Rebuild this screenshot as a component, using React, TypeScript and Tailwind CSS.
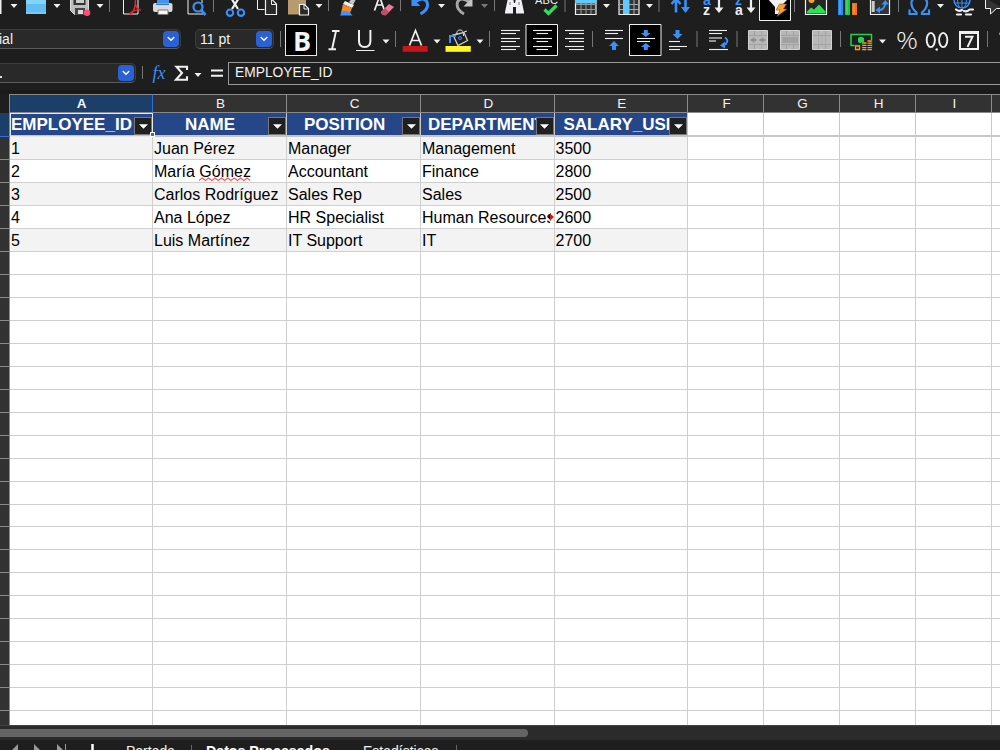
import type { ReactNode } from "react";

const W = "#f0f0f0";
const BLUE = "#3b8ff5";

/* An icon slot keeps the toolbar's own coordinates so neighbouring slots line up. */
function Slot({ x, w, y = 0, h, children }: { x: number; w: number; y?: number; h: number; children?: ReactNode }) {
  return (
    <svg className="block shrink-0" width={w} height={h} viewBox={`${x} ${y} ${w} ${h}`} fill="none">
      {children}
    </svg>
  );
}

function Caret({ x, y, c = W }: { x: number; y: number; c?: string }) {
  return <path d={`M${x - 3.5} ${y - 2}h7l-3.5 4z`} fill={c} />;
}

function Sep({ x, y1, y2 }: { x: number; y1: number; y2: number }) {
  return <path d={`M${x} ${y1}V${y2}`} stroke="#777" />;
}

function Top({ x, w, children }: { x: number; w: number; children?: ReactNode }) {
  return <Slot x={x} w={w} h={22}>{children}</Slot>;
}

function Fmt({ x, w, children }: { x: number; w: number; children?: ReactNode }) {
  return <Slot x={x} w={w} y={22} h={36}>{children}</Slot>;
}

function StandardBar() {
  return (
    <div className="flex h-[22px] w-[1000px] shrink-0 overflow-hidden">
      <Top x={0} w={22}><path d="M0 0h1.5v14H0z" fill={W} /><Caret x={14} y={6} /></Top>
      <Top x={22} w={43}>
        <path d="M26 0h20v13.5H26z" fill="#62bdf0" /><path d="M26 0h20v4H26z" fill="#86d3fa" /><path d="M26 13.2h20" stroke="#b9e4fb" />
        <Caret x={57} y={6} />
      </Top>
      <Top x={65} w={53}>
        <path d="M70.500-2h18v16.500h-14l-4-4z" fill="#bdbdbd" stroke="#ddd" /><path d="M73.500-2h12v7h-12z" fill="#333" /><path d="M76-2h8v5h-8z" fill="#ccc" />
        <path d="M75 8h10v7H75z" fill="#444" /><path d="M78 10h5v4h-5z" fill="#ddd" />
        <circle cx="87" cy="12.800" r="3.300" fill="#ff4f70" />
        <Caret x={100} y={6} /><Sep x={109.500} y1={0} y2={12} />
      </Top>
      <Top x={118} w={30}>
        <path d="M123.500-3v17h14.500v-17" stroke={W} />
        <path d="M135.500 0c0 8-2 12-5 14.500c-1.500-1.500 4-5.500 10.500-4.500c-3 0-5-3-5.500-6" stroke="#d82b30" strokeWidth="1.500" />
      </Top>
      <Top x={148} w={32}>
        <path d="M157-3h12V4h-12z" fill="#4694ea" />
        <rect x="153" y="3" width="19.500" height="9" rx="2" fill="#d9d9df" /><path d="M156 3.500h13V5h-13z" fill="#3274c6" />
        <path d="M158 10h10v4.500h-10z" fill="#f8f8f8" stroke="#777" />
      </Top>
      <Top x={180} w={40}>
        <path d="M188-3v17h15" stroke={W} /><path d="M202-2v5" stroke={W} />
        <circle cx="198" cy="7" r="4.500" stroke={BLUE} strokeWidth="2.200" /><path d="m201 10 4.500 5" stroke={BLUE} strokeWidth="2.700" />
        <Sep x={213.500} y1={0} y2={12} />
      </Top>
      <Top x={220} w={32}>
        <path d="m230.500-3 7.500 12M239.500-3l-7.500 12" stroke={W} strokeWidth="2.200" />
        <circle cx="230" cy="12.700" r="3.200" stroke={BLUE} strokeWidth="2.100" /><circle cx="241" cy="12.700" r="3.200" stroke={BLUE} strokeWidth="2.100" />
      </Top>
      <Top x={252} w={32}>
        <path d="M257.500-3v12.500h7" stroke={W} /><path d="M265.500-.5h6.500l4.500 4.500v10.500h-11z" fill="#2a2a2a" stroke={W} strokeWidth="1.200" /><path d="M271.500 0v4.500h5" stroke={W} />
      </Top>
      <Top x={284} w={50}>
        <path d="M288-1h18v15.500h-18z" fill="#b79a6d" /><path d="M299.500 4.500h5l4 4v6.500h-9z" fill="#292929" stroke={W} strokeWidth="1.200" /><path d="M304 5v4h4.500" stroke={W} />
        <Caret x={319} y={6} /><Sep x={328.500} y1={0} y2={11} />
      </Top>
      <Top x={334} w={32}>
        <path d="m349 2 4-5 3 2-3 6z" fill="#c9c9c9" /><path d="m345 1 9 4-2 3-9-4z" fill="#eee" />
        <path d="m343 4 9 4-2 5h-9z" fill="#f28a24" /><path d="M342 11.500q5-1.500 8 1l2.500 3H340z" fill="#3e94ff" />
      </Top>
      <Top x={366} w={40}>
        <path d="m374.500 10.500 5-14 5 14M376 5h7" stroke={W} strokeWidth="1.700" />
        <path d="m381 12 8-8 5 3-8 8q-4 1-5-3z" fill="#e97d98" /><path d="m381 12 4-4 4 4-3 3q-4 1-5-3z" fill="#b9506b" />
        <Sep x={400.500} y1={0} y2={11} />
      </Top>
      <Top x={406} w={44}>
        <path d="M415 2q8-6 12 0q2.500 7-6.500 12" stroke={BLUE} strokeWidth="3" /><path d="M411.500-3v9h9z" fill={BLUE} /><Caret x={441.500} y={6} />
      </Top>
      <Top x={450} w={50}>
        <path d="M469 2q-8-6-11.500 0q-2 7 6.500 12" stroke="#a8a8a8" strokeWidth="2.800" /><path d="M472.500-3v9.500h-9z" fill="#c4c4c4" /><Caret x={484.500} y={6} c="#777" /><Sep x={494.500} y1={0} y2={11} />
      </Top>
      <Top x={500} w={30}>
        <path d="M508-2h5l1 5h1l1-5h5l3 14v1.500h-8V7h-3v6.500h-8V12z" fill="#f1f0f5" /><path d="M510 2v3M519 2v3" stroke="#777" />
      </Top>
      <Top x={530} w={40}>
        <text x="535" y="3.500" fontSize="11" fontFamily="Liberation Sans, sans-serif" fill={W} textLength="23">ABC</text>
        <path d="m544.500 9.500 4 4 8-8" stroke="#27e552" strokeWidth="3.200" /><Sep x={565} y1={0} y2={12} />
      </Top>
      <Top x={570} w={44}>
        <path d="M575.500-3h20.500v17.500h-20.500z" fill="#333" stroke={W} strokeWidth="1.200" /><path d="M576 4.500h20M576 9.500h20M581 3v11M586 3v11M591 3v11" stroke="#999" /><path d="M575-1h21.500v4.500H575z" fill="#62c9fb" />
        <Caret x={606.500} y={6} />
      </Top>
      <Top x={614} w={50}>
        <path d="M619-3h20v17.500h-20z" fill="#333" stroke={W} strokeWidth="1.200" /><path d="M619 4.500h20M619 9.500h20M624 0v14M629 0v14M634 0v14" stroke="#aaa" /><path d="M623-1h6v15h-6z" fill="#62c9fb" />
        <Caret x={649.500} y={6} /><Sep x={659} y1={0} y2={12} />
      </Top>
      <Top x={664} w={34}>
        <path d="M676 12.500V-2M671.500 4l4.500-5 4.500 5" stroke={BLUE} strokeWidth="2.600" /><path d="M685.500-3v13" stroke={BLUE} strokeWidth="2.600" /><path d="M681 7h9l-4.500 6z" fill={BLUE} />
      </Top>
      <Top x={698} w={32}>
        <text x="703" y="4.500" fontSize="14" fontWeight="700" fontFamily="Liberation Sans, sans-serif" fill={BLUE}>a</text>
        <text x="703" y="15" fontSize="14" fontWeight="700" fontFamily="Liberation Sans, sans-serif" fill={W}>z</text>
        <path d="M719-2v13" stroke={W} strokeWidth="2.200" /><path d="M714.500 7.500h9L719 13z" fill={W} />
      </Top>
      <Top x={730} w={29}>
        <text x="735" y="4.500" fontSize="14" fontWeight="700" fontFamily="Liberation Sans, sans-serif" fill={BLUE}>z</text>
        <text x="735" y="15" fontSize="14" fontWeight="700" fontFamily="Liberation Sans, sans-serif" fill={W}>a</text>
        <path d="M751-2v13" stroke={W} strokeWidth="2.200" /><path d="M746.500 7.500h9L751 13z" fill={W} />
      </Top>
      <Top x={759} w={41}>
        <path d="M759.500-2h31v22.500h-31z" fill="#000" stroke={W} /><path d="M767-2h22l-9 9v7h-5V7z" fill={W} />
        <path d="m779.500 4h7l-3 5h3.500l-10 7.500 3-6.500h-4z" fill="#f9a12a" stroke="#7a4a10" strokeWidth=".5" /><Sep x={794.500} y1={0} y2={12} />
      </Top>
      <Top x={800} w={32}>
        <path d="M805.500-3h21v17.500h-21z" fill="#262626" stroke={W} strokeWidth="1.200" /><circle cx="811.500" cy="0" r="3" fill="#f5a630" /><path d="M807 13.500v-2l4-4 3 2 5-5 6.500 7v2z" fill="#2be253" />
      </Top>
      <Top x={832} w={32}>
        <path d="M838-2h5v17h-5z" fill="#268bef" /><path d="M845-2h5v17h-5z" fill="#16c94b" /><path d="M852 3h5v12h-5z" fill="#ef711b" />
        <path d="M840 0v14M847 0v14M854 4v10" stroke="#fff" strokeOpacity=".3" />
      </Top>
      <Top x={864} w={40}>
        <path d="M870.500-3h19v17.500h-19z" fill="#333" stroke={W} strokeWidth="1.200" /><path d="M873.200 1v11" stroke="#ccc" strokeWidth="3" />
        <path d="M877 10q8 1 8.500-8" stroke={BLUE} strokeWidth="2" /><path d="M881.500 4.500h7.500l-3.700-4.500zM880 6.500v7l-4.500-3.500z" fill={BLUE} /><Sep x={898.500} y1={0} y2={12} />
      </Top>
      <Top x={904} w={44}>
        <path d="M909.500 9.500v4.500h7v-1.500c-3.500-3-5.500-6.500-5-10.500c1-6 14.500-6 15.500 0c.5 4-1.500 7.500-5 10.500v1.500h7V9.500" stroke={BLUE} strokeWidth="2.200" /><Caret x={940.500} y={6} />
      </Top>
      <Top x={948} w={32}>
        <circle cx="962" cy="0" r="8" stroke={BLUE} strokeWidth="1.500" /><path d="M954 3h16M962 0v8M957.500 0q0 5 2.500 8M966.500 0q0 5-2.500 8" stroke={BLUE} />
        <path d="M954 10q4-1 8 1t10-1M956 14.500h16" stroke="#1e1e1e" strokeWidth="4" /><path d="M956 9.500q3 2.500 6 .5M964 11q3 1 5-1M957 14.500h4M966 14.500h5M970 9.500h3" stroke={W} strokeWidth="2.200" strokeLinecap="round" />
      </Top>
      <Top x={980} w={20}><path d="M985.500-2v10.500h5v5.500l6-5.500h7" stroke={W} fill="#333" /></Top>
    </div>
  );
}

function DropButton() {
  return (
    <span className="flex size-4 items-center justify-center rounded-[4px] bg-[#2b61d4]">
      <svg width="8" height="6" viewBox="0 0 8 6" fill="none"><path d="m1.200 1.500 2.800 2.700 2.800-2.700" stroke="#fff" strokeWidth="1.500" strokeLinecap="round" /></svg>
    </span>
  );
}

function Lines({ rows }: { rows: [number, number, number][] }) {
  return <>{rows.map(([a, b, y]) => <path key={y} d={`M${a} ${y}H${b}`} stroke={W} strokeWidth="1.1" />)}</>;
}

function BlueArrow({ x, y, up }: { x: number; y: number; up?: boolean }) {
  const s = up ? -1 : 1;
  return <path d={`M${x} ${y}l-5 ${-5 * s}h3v${-4 * s}h4v${4 * s}h3z`} fill={BLUE} />;
}

function Merge({ x, kind }: { x: number; kind: number }) {
  return (
    <>
      <path d={`M${x + .5} 30.500h19v19h-19z`} fill="#b8b8b8" stroke="#d2d2d2" />
      <path d={`M${x + 6.5} 31v4m7-4v4m-7 10v4m7-4v4M${x + 1} 35.500h18m-18 9h18`} stroke="#a2a2a2" />
      {kind === 0 && <path d={`M${x + 2} 40l4.500-3v2h2v2h-2v2zM${x + 18} 40l-4.500-3v2h-2v2h2v2z`} fill="#8e8e8e" />}
      {kind === 1 && <path d={`M${x + 2} 37h16v6h-16z`} fill="#a2a2a2" />}
      {kind === 2 && <path d={`M${x + 6.500} 36v8m3.500-8v8m3.500-8v8`} stroke="#aaa" />}
    </>
  );
}

function FormatBar() {
  return (
    <div className="flex h-9 w-[1000px] shrink-0 items-center overflow-hidden font-['Liberation_Sans',sans-serif] text-sm text-[#f2f2f2]">
      <div className="-ml-1 mt-[-2px] flex h-5 w-[185px] shrink-0 items-center justify-between rounded-[5px] border border-[#3c3c3c] border-b-[#5a5a5a] bg-[#292929] pr-px pl-[2px]">
        <span>ial</span><DropButton />
      </div>
      <div className="mt-[-2px] ml-3.5 flex h-5 w-[79px] shrink-0 items-center justify-between rounded-[5px] border border-[#3c3c3c] border-b-[#5a5a5a] bg-[#292929] pr-px pl-1">
        <span>11 pt</span><DropButton />
      </div>
      <Fmt x={274} w={11}><Sep x={280.500} y1={31} y2={47} /></Fmt>
      <div className="flex size-8 shrink-0 items-center justify-center border border-[#e8e8e8] bg-black pl-0.5 font-['Open_Sans',sans-serif] text-[27px] leading-none font-bold">B</div>
      <Fmt x={317} w={33}><path d="M332 31h7.500M328.500 49.300h7.500M336 31l-4 18.500" stroke={W} strokeWidth="1.900" /></Fmt>
      <Fmt x={350} w={51}>
        <path d="M359 30v11q0 6 5.700 6t5.700-6V30" stroke={W} strokeWidth="2" /><path d="M356 50.500h18.500" stroke={W} />
        <Caret x={386} y={41.500} /><Sep x={395.500} y1={31} y2={47} />
      </Fmt>
      <Fmt x={401} w={43}>
        <path d="m409.500 45.500 6-15 6 15M411.500 40.500h8" stroke={W} strokeWidth="1.700" /><path d="M402.700 46h25v5.800h-25z" fill="#c9151c" /><Caret x={437} y={41.500} />
      </Fmt>
      <Fmt x={444} w={51}>
        <path d="m453 35 11-2.500 3.500 8-9.500 5z" stroke="#ccc" strokeWidth="1.300" /><path d="M457 35q-1-5 3-5t3.500 6M464 32l3-1" stroke="#ddd" /><path d="M450 43v-7h6" stroke={BLUE} strokeWidth="2" /><circle cx="460" cy="38" r="1.500" stroke={BLUE} />
        <path d="M445.500 46h25.300v5.800h-25.300z" fill="#fff62c" /><Caret x={480} y={41.500} /><Sep x={489.500} y1={31} y2={47} />
      </Fmt>
      <Fmt x={495} w={30}><Lines rows={[[501, 520, 30.5], [501, 516, 33.5], [501, 520, 38.5], [501, 516, 41.5], [501, 520, 46.5], [501, 516, 49.5]]} /></Fmt>
      <Fmt x={525} w={34}>
        <path d="M526 24.500h31.500v31H526z" fill="#000" stroke={W} />
        <Lines rows={[[533, 552, 30.5], [536.5, 548, 33.5], [533, 552, 38.5], [536.5, 548, 41.5], [533, 552, 46.5], [536.5, 548, 49.5]]} />
      </Fmt>
      <Fmt x={559} w={40}><Lines rows={[[565, 584, 30.5], [569, 584, 33.5], [565, 584, 38.5], [569, 584, 41.5], [565, 584, 46.5], [569, 584, 49.5]]} /><Sep x={592.500} y1={31} y2={47} /></Fmt>
      <Fmt x={599} w={30}><Lines rows={[[605, 623, 30.5], [605, 618, 33.5], [605, 623, 38.5]]} /><BlueArrow x={614} y={41} up /></Fmt>
      <Fmt x={629} w={33}>
        <path d="M629.500 24.500h31.500v31h-31.500z" fill="#000" stroke={W} />
        <Lines rows={[[637, 655, 38.5], [637, 650, 41.5]]} />
        <path d="m645.800 37-5-4h3v-3h4v3h3zM645.800 43l-5 4h3v3h4v-3h3z" fill={BLUE} />
      </Fmt>
      <Fmt x={662} w={40}><BlueArrow x={677.500} y={39} /><Lines rows={[[669, 687, 46.5], [669, 680, 49.5], [669, 680, 41.5]]} /><Sep x={697} y1={31} y2={47} /></Fmt>
      <Fmt x={702} w={40}>
        <Lines rows={[[709, 727, 30.5], [709, 722, 33.5], [709, 722, 38], [709, 716, 41], [709, 728, 49.5]]} />
        <path d="M725 37.500q4 2.500 1 6.500l-3 1" stroke={BLUE} strokeWidth="2" /><path d="M720 45.500l5-4v7z" fill={BLUE} /><Sep x={737} y1={31} y2={47} />
      </Fmt>
      <Fmt x={742} w={32}><Merge x={748} kind={0} /></Fmt>
      <Fmt x={774} w={32}><Merge x={780} kind={1} /></Fmt>
      <Fmt x={806} w={40}><Merge x={812} kind={2} /><Sep x={840.500} y1={31} y2={47} /></Fmt>
      <Fmt x={846} w={46}>
        <path d="M851 34.500h20.500v11H851z" stroke="#24d24e" strokeWidth="1.500" /><circle cx="861" cy="40" r="3.200" fill="#24d24e" />
        <path d="M854.500 44.500h7v-2.500h5v-2h6v10.500h-18z" fill="#222" />
        <path d="M855.500 46h4v3.500h-4zM862.500 43h3.500M862.500 45.300h3.500M862.500 47.600h3.500M862.500 49.600h3.500M868 41h3.500M868 43.200h3.500M868 45.400h3.500M868 47.600h3.500M868 49.600h3.500" stroke="#f2a02d" strokeWidth="1.300" strokeLinecap="round" /><Caret x={882.500} y={41.500} />
      </Fmt>
      <Fmt x={892} w={30}><text x="896" y="49" fontSize="24" fontWeight="300" fontFamily="Open Sans, sans-serif" fill={W} textLength="22" lengthAdjust="spacingAndGlyphs">%</text></Fmt>
      <Fmt x={922} w={31}>
        <ellipse cx="930.800" cy="40" rx="4.100" ry="7.100" stroke={W} strokeWidth="1.900" /><ellipse cx="943.200" cy="40" rx="4.100" ry="7.100" stroke={W} strokeWidth="1.900" /><circle cx="936.700" cy="49.500" r="1.200" fill={W} />
      </Fmt>
      <Fmt x={953} w={47}>
        <path d="M960 32h18v17h-18z" stroke={W} strokeWidth="2" /><path d="M959 31h20v3h-20z" fill={W} /><path d="M965 36.700h7.500l-5 10.300" stroke={W} strokeWidth="1.900" />
        <Sep x={987.500} y1={31} y2={47} /><path d="M999 32.500h1V35h-1z" fill={BLUE} />
      </Fmt>
    </div>
  );
}

function FormulaBar() {
  return (
    <div className="flex h-8 w-full shrink-0 items-start pt-1 font-['Liberation_Sans',sans-serif] text-sm text-[#f2f2f2]">
      <div className="mt-px -ml-1 flex h-5 w-[140px] shrink-0 items-center justify-between rounded-[5px] border border-[#3c3c3c] border-b-[#5a5a5a] bg-[#292929] pr-px">
        <span className="mt-2 ml-[3px] block h-[2px] w-[2px] bg-[#ddd]" /><DropButton />
      </div>
      <Slot x={136} w={92} y={62} h={24}>
        <Sep x={142.500} y1={66} y2={79} />
        <text x="152.500" y="79" fontSize="18" fontStyle="italic" fontFamily="Liberation Serif, serif" fill={BLUE}>fx</text>
        <path d="M187 70v-3.200h-10.500l5.500 6.200-6 6.800H187v-3.500" stroke={W} strokeWidth="2.100" />
        <Caret x={198} y={75} /><path d="M211 70.500h12M211 75.800h12" stroke={W} strokeWidth="2" />
      </Slot>
      <div className="flex h-[23px] grow items-center border border-r-0 border-[#999] pb-0.5 pl-1.5 text-[13.8px]">EMPLOYEE_ID</div>
    </div>
  );
}

const headers = ["EMPLOYEE_ID", "NAME", "POSITION", "DEPARTMENT", "SALARY_USD"];
const letters = ["A", "B", "C", "D", "E", "F", "G", "H", "I", ""];
const data = [
  ["1", "Juan Pérez", "Manager", "Management", "3500"],
  ["2", "María Gómez", "Accountant", "Finance", "2800"],
  ["3", "Carlos Rodríguez", "Sales Rep", "Sales", "2500"],
  ["4", "Ana López", "HR Specialist", "Human Resources", "2600"],
  ["5", "Luis Martínez", "IT Support", "IT", "2700"],
];
const columns = "grid w-[1008px] shrink-0 grid-cols-[10px_143px_134px_134px_133.500px_133.500px_76px_76px_76px_76px_16px]";
const headerPad = ["pl-px", "pl-8", "pl-[17px]", "pl-[7px]", "pl-[9px]"];

function FilterButton() {
  return (
    <span className="flex size-[18px] shrink-0 items-center justify-center border border-[#777] bg-[#202020]">
      <svg width="9" height="5" viewBox="0 0 9 5"><path d="M0 .3h9L4.500 4.800z" fill="#fff" /></svg>
    </span>
  );
}

function CellText({ value }: { value: string }) {
  if (value === "María Gómez") {
    return (
      <span className="whitespace-pre">
        María <span className="relative">Gómez
          <svg className="absolute top-[14px] left-0" width="52" height="5" viewBox="0 0 52 5" fill="none">
            <path d="m0 3.500 3.200-2.500 3.200 2.500 3.200-2.500 3.200 2.500 3.200-2.500 3.200 2.500 3.200-2.500 3.200 2.500 3.200-2.500 3.200 2.500 3.200-2.500 3.200 2.500 3.200-2.500 3.200 2.500 3.200-2.500 3.200 2.500" stroke="#ff5a5a" strokeWidth="1.200" />
          </svg>
        </span>
      </span>
    );
  }
  return <>{value}</>;
}

function Sheet() {
  return (
    <div className="h-[631px] w-full shrink-0 overflow-hidden bg-white font-['Liberation_Sans',sans-serif]">
      <div className={`${columns} h-[19px] bg-[#323232] text-[13.500px] leading-none text-[#f4f4f4]`}>
        <div className="border-r border-[#8a8a8a] bg-[#1e1e1e]" />
        {letters.map((l, i) => (
          <div key={i} className={i === 0
            ? "flex items-center justify-center border-y border-r border-t-[#8a8a8a] border-r-[#2b6fe0] border-b-[#8a8a8a] bg-[#1b3f69] pl-px font-bold"
            : "flex items-center justify-center border-y border-r border-[#8a8a8a] pl-0.5"}>{l}</div>
        ))}
      </div>
      <div className={`${columns} h-6`}>
        <div className="border-r border-b border-r-[#8a8a8a] border-b-[#2b6fe0] bg-[#1b3f69]" />
        {headers.map((h, i) => (
          <div key={h} className="relative flex items-stretch border-r border-b-2 border-[#c4c4c4] bg-[#25478a]">
            <div className={`${headerPad[i]} flex min-w-0 grow items-center overflow-hidden pt-px text-[17px] leading-none font-bold text-white`}>{h}</div>
            <div className="flex items-end"><FilterButton /></div>
            {i === 0 && <div className="absolute -right-px -bottom-0.5 left-0 top-0 border border-[#e8e8e8]" />}
            {i === 0 && <div className="absolute -right-[3px] -bottom-0.5 z-10 size-[5px] border border-white bg-[#666]" />}
          </div>
        ))}
        {[0, 1, 2, 3, 4].map((i) => <div key={i} className="border-r border-b-2 border-[#c8c8c8]" />)}
      </div>
      {Array.from({ length: 26 }, (_, r) => (
        <div key={r} className={`${columns} h-[22.970px]`}>
          <div className="border-r border-b border-[#8a8a8a] bg-[#323232]" />
          {Array.from({ length: 10 }, (_, c) => (
            <div key={c} className={`relative flex items-start border-r border-b border-[#cfcfcf] pl-px text-base leading-none whitespace-nowrap text-black ${r < 5 && r % 2 === 0 && c < 5 ? "bg-[#f3f3f3]" : ""}`}>
              <div className={`overflow-hidden pt-px leading-[21px] ${r === 3 && c === 3 ? "w-32" : "w-full"}`}>{r < 5 && c < 5 && <CellText value={data[r][c]} />}</div>
              {r === 3 && c === 3 && (
                <svg className="absolute top-1.5 right-0" width="6" height="10" viewBox="0 0 6 10"><path d="M3 .8v8.400L0 5z" fill="#111" /><path d="M2 1.500v7L6 5z" fill="#e21111" /></svg>
              )}
            </div>
          ))}
        </div>
      ))}
    </div>
  );
}

function BottomBar() {
  return (
    <>
      <div className="flex h-[15px] shrink-0 items-center border-t border-[#444] bg-[#2b2b2b]">
        <div className="h-2 w-[528px] rounded-r-full bg-[#646464]" />
      </div>
      <div className="flex h-[10px] shrink-0 overflow-hidden bg-[#1e1e1e] font-['Liberation_Sans',sans-serif] text-sm leading-[23px] text-[#f4f4f4]">
        <svg className="shrink-0" width="126" height="10" viewBox="0 740 126 10">
          <path d="m18 744-7 7h7zM34 744v7h7zM57 744v7h7z" fill="#999" /><path d="M65.500 744v7" stroke="#999" /><path d="M92.500 744v7" stroke="#fff" strokeWidth="2.500" />
        </svg>
        <span className="block w-[65px] shrink-0">Portada</span>
        <span className="mt-[5px] block h-4 w-px bg-[#666]" />
        <span className="ml-3.5 block w-[157px] shrink-0 text-[14.200px] font-bold text-white">Datos Procesados</span>
        <span className="block w-[93px] shrink-0">Estadísticas</span>
        <span className="mt-[5px] block h-4 w-px bg-[#666]" />
      </div>
    </>
  );
}

export default function App() {
  return (
    <div className="flex h-[750px] w-[1000px] flex-col overflow-hidden bg-[#1e1e1e]">
      <StandardBar />
      <FormatBar />
      <FormulaBar />
      <div className="h-1 shrink-0 bg-[#1b191a]" />
      <Sheet />
      <BottomBar />
    </div>
  );
}
